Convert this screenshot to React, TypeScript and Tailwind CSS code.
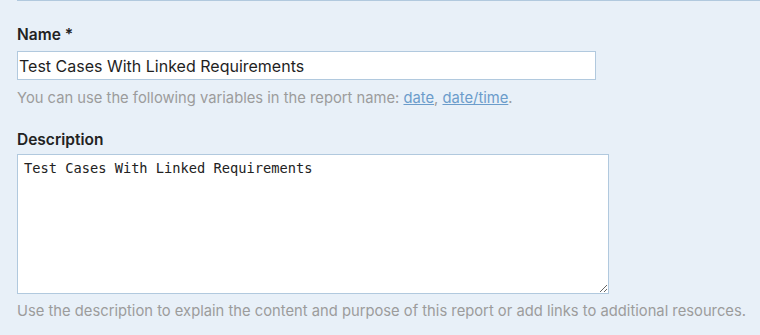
export default function App() {
  return (
    <div className="min-h-[335px] w-[760px] overflow-hidden bg-[#e8f0f8] font-['Inter',sans-serif]">
      <div className="ml-[17px] border-t border-[#b1c9de] pt-[24px]">
        {/* Name */}
        <div>
          <label className="block text-[15.5px] font-semibold leading-[20px] text-[#222]">Name *</label>
          <input
            type="text"
            defaultValue="Test Cases With Linked Requirements"
            className="mt-[6px] block h-[29px] w-[579px] border border-[#b1c9de] bg-white px-px text-[16px] text-[#1f1f1f] outline-none"
          />
          <p className="mt-[8px] text-[14.75px] leading-[20px] text-[#9c9c9c]">
            You can use the following variables in the report name:{" "}
            <a className="text-[#6b9ccb] underline">date</a>,{" "}
            <a className="text-[#6b9ccb] underline">date/time</a>.
          </p>
        </div>

        {/* Description */}
        <div className="mt-[22px]">
          <label className="block text-[15.5px] font-semibold leading-[20px] text-[#222]">Description</label>
          <textarea
            defaultValue="Test Cases With Linked Requirements"
            className="mt-[4px] block h-[140px] w-[592px] resize-y border border-[#b1c9de] bg-white px-[6px] py-[5px] font-['DejaVu_Sans_Mono',monospace] text-[13.7px] leading-[17px] text-[#222] outline-none"
          />
          <p className="mt-[7px] text-[14.75px] leading-[20px] text-[#9c9c9c]">
            Use the description to explain the content and purpose of this report or add links to additional resources.
          </p>
        </div>
      </div>
    </div>
  );
}
